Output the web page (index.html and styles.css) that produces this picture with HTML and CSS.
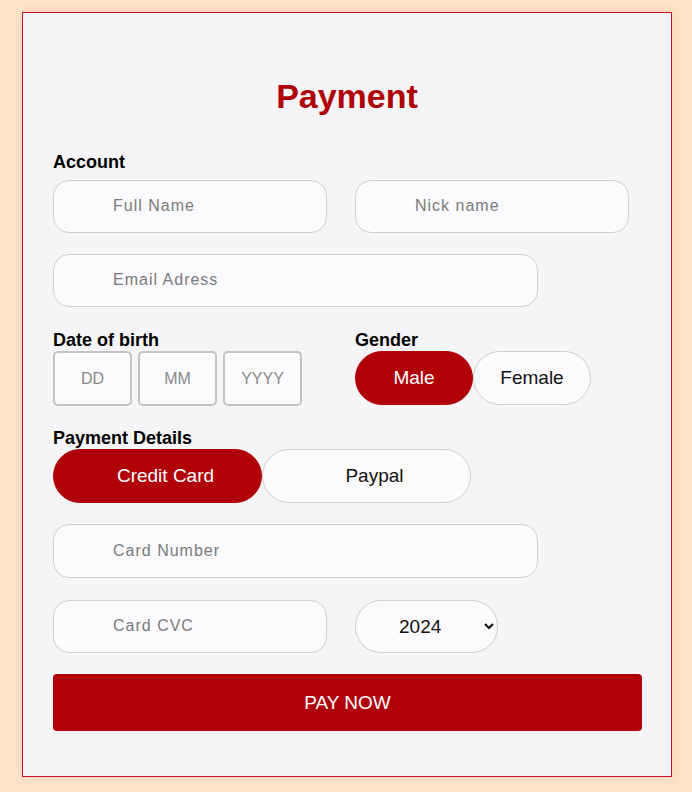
FILE: index.html
```html
<!DOCTYPE html>
<html>
<head>
<meta charset="utf-8">
<link rel="stylesheet" href="styles.css">
</head>
<body>
<div class="card">
  <h1 class="title">Payment</h1>

  <div class="label">Account</div>
  <div class="row gap28">
    <input class="field half" placeholder="Full Name">
    <input class="field half" placeholder="Nick name">
  </div>
  <input class="field wide mt21" placeholder="Email Adress">

  <div class="row gap53 mt23">
    <div class="group">
      <div class="label">Date of birth</div>
      <div class="row gap6">
        <input class="box" placeholder="DD">
        <input class="box" placeholder="MM">
        <input class="box" placeholder="YYYY">
      </div>
    </div>
    <div class="group">
      <div class="label">Gender</div>
      <div class="row">
        <button class="pill small active">Male</button>
        <button class="pill small">Female</button>
      </div>
    </div>
  </div>

  <div class="label tight mt22">Payment Details</div>
  <div class="row">
    <button class="pill large active">Credit Card</button>
    <button class="pill large">Paypal</button>
  </div>

  <input class="field wide tall mt21" placeholder="Card Number">
  <div class="row gap28 mt22">
    <input class="field half" placeholder="Card CVC">
    <select class="year">
      <option>2024</option>
    </select>
  </div>

  <button class="pay">PAY NOW</button>
</div>
</body>
</html>
```
FILE: styles.css
```css
html, body {
  margin: 0;
  padding: 0;
  background: #fde3c7;
  font-family: "Liberation Sans", Arial, sans-serif;
}
body {
  padding: 12px 0 16px 22px;
}
.card {
  box-sizing: border-box;
  width: 650px;
  height: 765px;
  background: #f5f4f6;
  border: 1px solid #c8102e;
  box-shadow: 0 0 10px rgba(160, 80, 40, 0.12);
  padding: 0 30px;
  display: flex;
  flex-direction: column;
}
.title {
  margin: 63px 0 0;
  text-align: center;
  font-size: 34px;
  line-height: 40px;
  color: #b00008;
  font-weight: bold;
}
.label {
  font-size: 18px;
  font-weight: bold;
  line-height: 21px;
  color: #000;
  margin-top: 36px;
  margin-bottom: 7px;
}
.label.tight { margin-bottom: 0; }
.group .label { margin-top: 0; margin-bottom: 0; }
.mt21 { margin-top: 21px; }
.mt22 { margin-top: 22px; }
.mt23 { margin-top: 23px; }
.row {
  display: flex;
  align-items: center;
}
.gap28 { gap: 28px; }
.gap53 { gap: 53px; align-items: flex-start; }
.gap6 { gap: 6px; }
.field {
  box-sizing: border-box;
  height: 53px;
  border: 1px solid #cfcfd2;
  border-radius: 16px;
  background: #fbfbfd;
  padding: 0 0 1px 59px;
  font-family: "Liberation Sans", Arial, sans-serif;
  font-size: 16px;
  letter-spacing: 1px;
  outline: none;
}
.field.tall { height: 54px; }
.field::placeholder { color: #7a7a7a; }
.half { width: 274px; }
.wide { width: 485px; }
.box {
  box-sizing: border-box;
  width: 79px;
  height: 55px;
  border: 2px solid #c4c4c4;
  border-radius: 5px;
  background: #fbfbfd;
  text-align: center;
  font-family: "Liberation Sans", Arial, sans-serif;
  font-size: 16px;
  outline: none;
}
.box::placeholder { color: #8a8a8a; }
.pill {
  box-sizing: border-box;
  height: 54px;
  border: 1px solid #cfcfd2;
  background: #fbfbfd;
  color: #111;
  font-family: "Liberation Sans", Arial, sans-serif;
  font-size: 19px;
  border-radius: 27px;
  padding: 0;
}
.pill.active {
  background: #b00008;
  border-color: #b00008;
  color: #fff;
}
.small { width: 118px; }
.large { width: 209px; padding-left: 16px; }
.year {
  box-sizing: border-box;
  width: 143px;
  height: 53px;
  border: 1px solid #cfcfd2;
  border-radius: 26px;
  background: #fbfbfd;
  font-family: "Liberation Sans", Arial, sans-serif;
  font-size: 19px;
  color: #111;
  padding: 0 6px 0 39px;
  outline: none;
}
.pay {
  margin-top: 21px;
  width: 589px;
  height: 57px;
  background: #b00008;
  border: none;
  border-radius: 4px;
  color: #fff;
  font-family: "Liberation Sans", Arial, sans-serif;
  font-size: 19px;
}
```
